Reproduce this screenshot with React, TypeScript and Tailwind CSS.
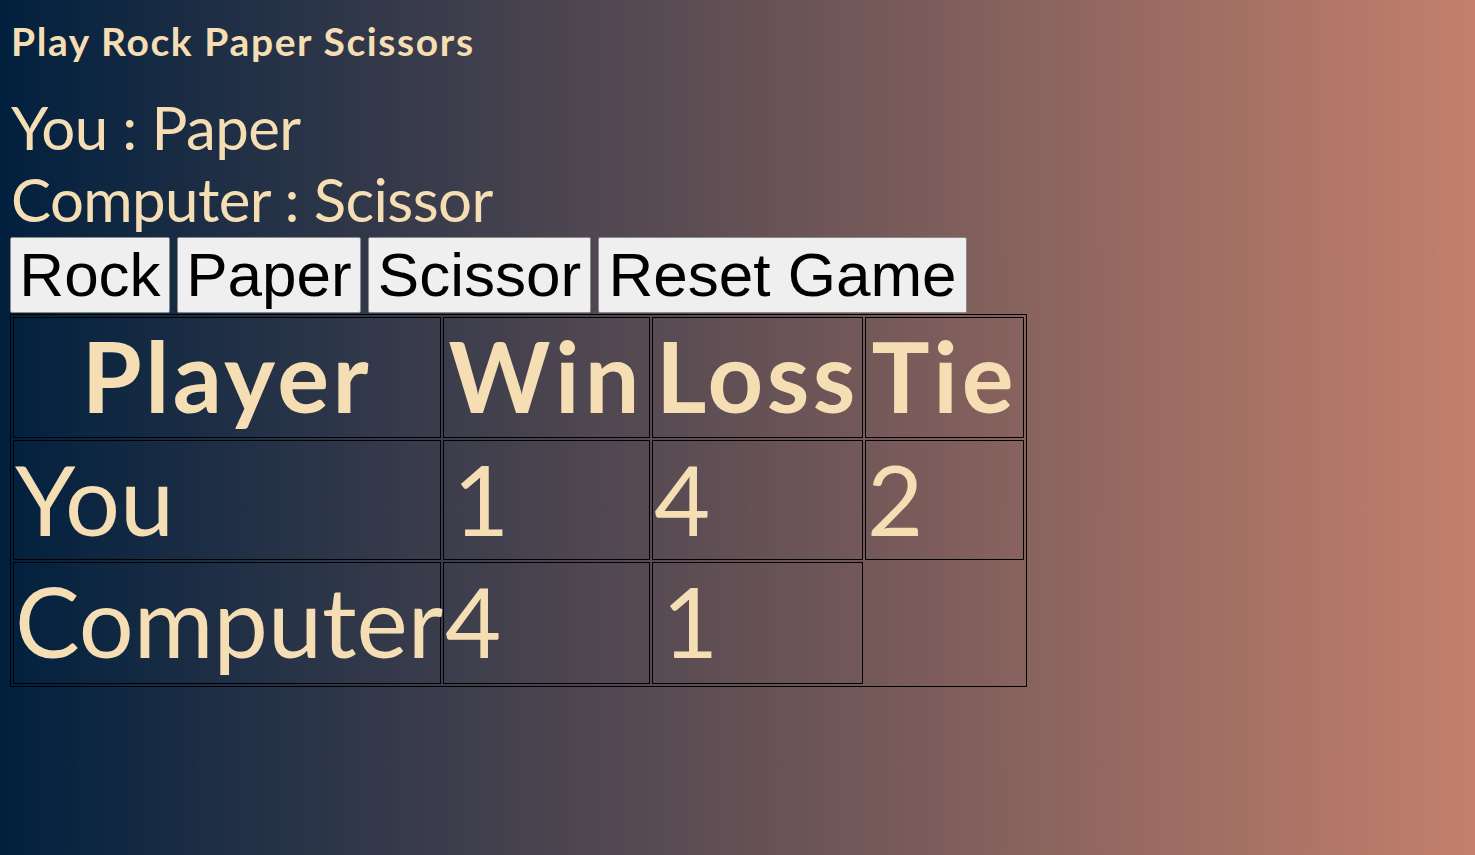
import React from "react";

const cellFont = { fontFamily: "Lato, 'Open Sans', sans-serif" };

export default function App() {
  return (
    <div
      className="min-h-screen w-full bg-[linear-gradient(to_right,#01203e,#c4806c)] px-[10px] text-[#f5deb3]"
      style={cellFont}
    >
      <h1 className="pt-[18px] text-[39px] font-bold leading-[46px] tracking-[1.6px] pl-[1px]">Play Rock Paper Scissors</h1>
      <div className="mt-[27px] text-[60px] leading-[72px] tracking-[-0.6px] pl-[1px]">You : Paper</div>
      <div className="text-[60px] leading-[72px] tracking-[-0.6px] pl-[1px]">Computer : Scissor</div>
      <div className="mt-[2px] flex gap-[7px]" style={{ fontFamily: "'Liberation Sans', Arial, sans-serif" }}>
        <button className="flex h-[76px] w-[160px] items-center justify-center rounded-[2px] border border-[#8a8a8a] bg-[#efefef] text-[62px] leading-none text-black">Rock</button>
        <button className="flex h-[76px] w-[184px] items-center justify-center rounded-[2px] border border-[#8a8a8a] bg-[#efefef] text-[62px] leading-none text-black">Paper</button>
        <button className="flex h-[76px] w-[223px] items-center justify-center rounded-[2px] border border-[#8a8a8a] bg-[#efefef] text-[62px] leading-none text-black">Scissor</button>
        <button className="flex h-[76px] w-[369px] items-center justify-center rounded-[2px] border border-[#8a8a8a] bg-[#efefef] text-[62px] leading-none text-black">Reset Game</button>
      </div>
      <table className="mt-[1px] table-fixed border-separate border-spacing-[2px] border border-black w-[1017px]">
        <colgroup>
          <col className="w-[428px]" />
          <col className="w-[207px]" />
          <col className="w-[211px]" />
          <col className="w-[159px]" />
        </colgroup>
        <thead>
          <tr>
            <th className="h-[121px] border border-black p-[1px] align-top text-center text-[97px] font-bold leading-[113px] tracking-[3.5px] whitespace-nowrap">Player</th>
            <th className="h-[121px] border border-black p-[1px] align-top text-center text-[97px] font-bold leading-[113px] tracking-[5px] whitespace-nowrap">Win</th>
            <th className="h-[121px] border border-black p-[1px] align-top text-center text-[97px] font-bold leading-[113px] tracking-[3.5px] whitespace-nowrap">Loss</th>
            <th className="h-[121px] border border-black p-[1px] align-top text-center text-[97px] font-bold leading-[113px] tracking-[4px] whitespace-nowrap">Tie</th>
          </tr>
        </thead>
        <tbody>
          <tr>
            <td className="h-[120px] border border-black p-[1px] align-top text-[97px] leading-[113px] whitespace-nowrap">You</td>
            <td className="h-[120px] border border-black p-[1px] pl-[9px] align-top text-[97px] leading-[113px] whitespace-nowrap">1</td>
            <td className="h-[120px] border border-black p-[1px] align-top text-[97px] leading-[113px] whitespace-nowrap">4</td>
            <td className="h-[120px] border border-black p-[1px] align-top text-[97px] leading-[113px] whitespace-nowrap">2</td>
          </tr>
          <tr>
            <td className="h-[122px] border border-black p-[1px] align-top text-[97px] leading-[113px] whitespace-nowrap">Computer</td>
            <td className="h-[122px] border border-black p-[1px] align-top text-[97px] leading-[113px] whitespace-nowrap">4</td>
            <td className="h-[122px] border border-black p-[1px] pl-[9px] align-top text-[97px] leading-[113px] whitespace-nowrap">1</td>
          </tr>
        </tbody>
      </table>
    </div>
  );
}
